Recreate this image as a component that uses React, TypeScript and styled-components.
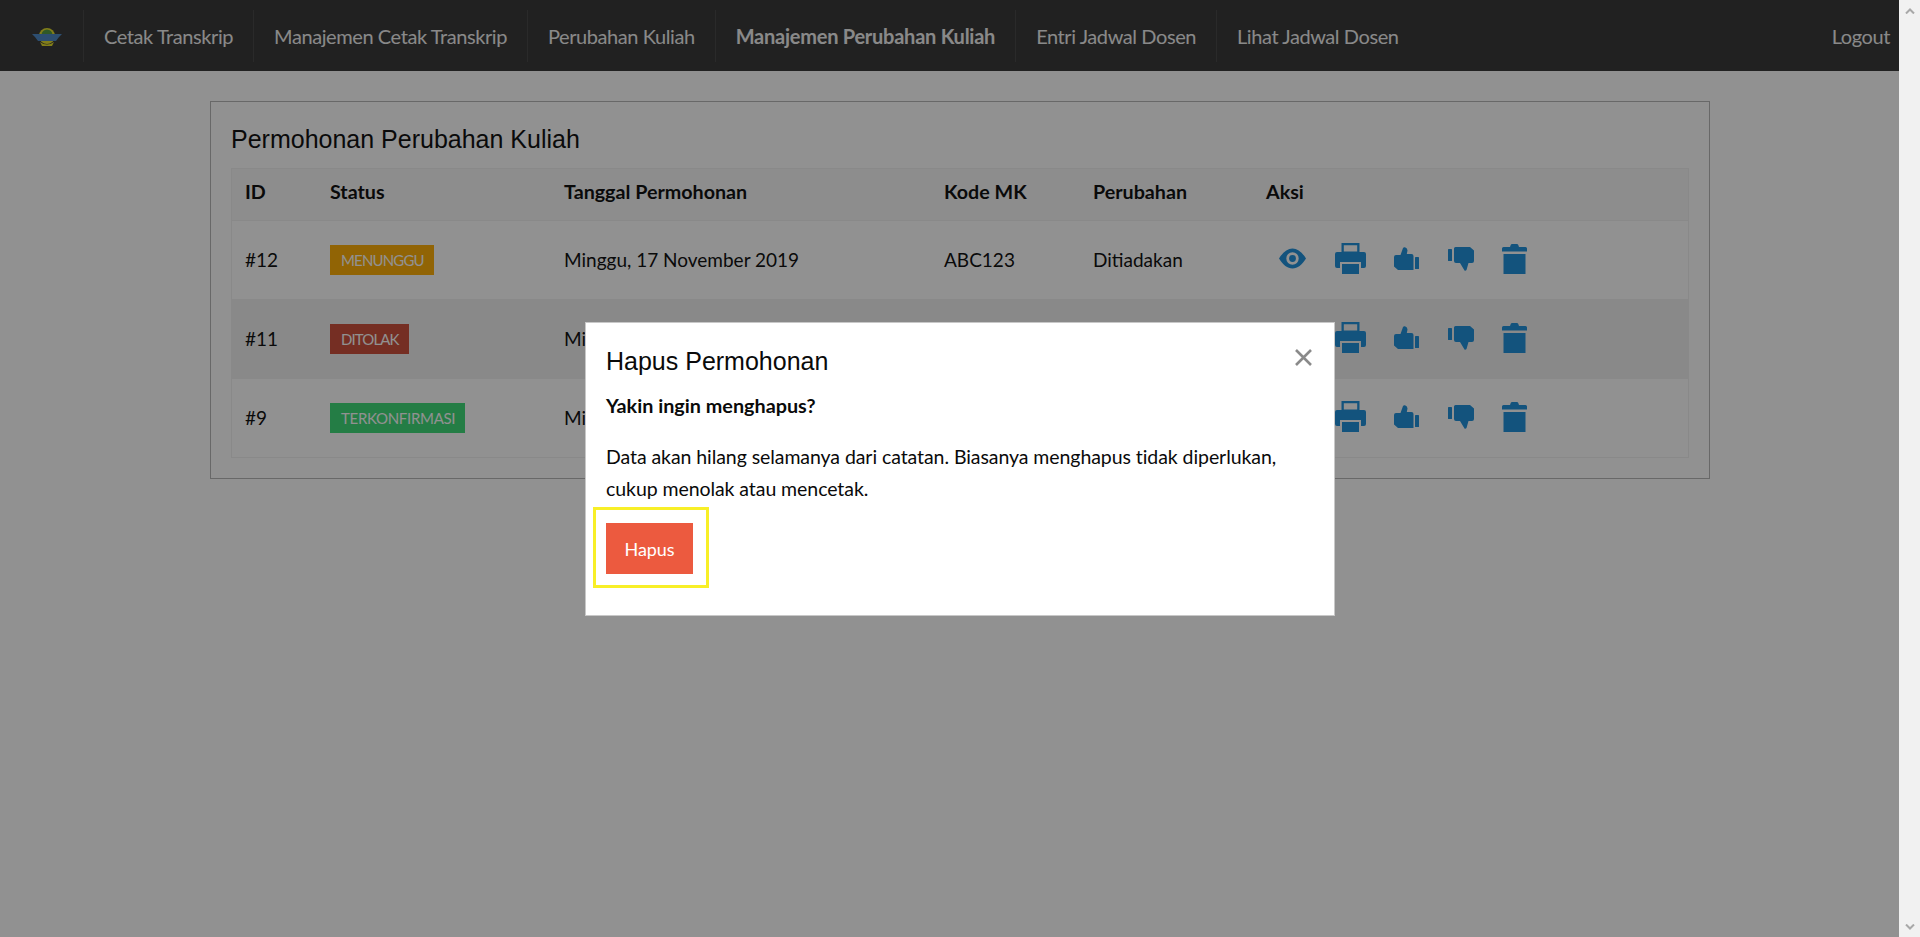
import React from "react";
import styled, { createGlobalStyle } from "styled-components";

const Global = createGlobalStyle`
  html, body { margin: 0; padding: 0; background: #fff; }
  body { font-family: Lato, "Open Sans", sans-serif; color: #0a0a0a; height: 937px; overflow: hidden; }
  * { box-sizing: border-box; }
`;

const Page = styled.div`
  width: 1920px;
  height: 937px;
  background: #fff;
`;

const Header = styled.header`
  height: 71px;
  background: #333;
  display: flex;
  align-items: center;
  padding: 0 30px 0 0;
`;

const LogoSlot = styled.div`
  width: 83px;
  display: flex;
  justify-content: center;
  padding-left: 11px;
  padding-top: 4px;
`;

const NavItem = styled.a<{ $active?: boolean }>`
  height: 52px;
  display: flex;
  align-items: center;
  padding: 0 20px;
  border-left: 1px solid #444;
  color: #f0f0f0;
  font-size: 20px;
  letter-spacing: ${(p) => (p.$active ? "-0.25px" : "-0.42px")};
  font-weight: ${(p) => (p.$active ? 700 : 400)};
  white-space: nowrap;
`;

const LogoutLink = styled.a`
  margin-left: auto;
  color: #f0f0f0;
  font-size: 20px;
  letter-spacing: -0.4px;
`;

const Panel = styled.section`
  width: 1500px;
  height: 378px;
  margin: 30px auto 0;
  border: 1px solid #b5b5b5;
  padding: 20px;
`;

const Title = styled.h2`
  margin: 0;
  height: 46px;
  font-family: "Liberation Sans", Arial, sans-serif;
  font-weight: 400;
  font-size: 25px;
  line-height: 34px;
  color: #0a0a0a;
`;

const Table = styled.div`
  border: 1px solid #f1f1f1;
`;

const Row = styled.div<{ $striped?: boolean }>`
  display: grid;
  grid-template-columns: 85px 234px 380px 149px 173px 1fr;
  align-items: center;
  height: 79px;
  background: ${(p) => (p.$striped ? "#f1f1f1" : "#fff")};
  border-bottom: 1px solid #f1f1f1;
  font-size: 19px;
  &:last-child { height: 78px; border-bottom: 0; }
`;

const HeadRow = styled(Row)`
  height: 52px;
  background: #f8f8f8;
  font-size: 19.7px;
  font-weight: 700;
  padding-bottom: 4px;
`;

const Cell = styled.div`
  padding: 0 0 2px 13px;
  white-space: nowrap;
`;

const BadgeCell = styled(Cell)`
  padding-bottom: 0;
`;

const tones = {
  warning: { bg: "#ffae00", spacing: "-0.85px" },
  alert: { bg: "#cc4b37", spacing: "-0.9px" },
  success: { bg: "#3adb76", spacing: "-0.3px" },
};

const Badge = styled.span<{ $tone: keyof typeof tones }>`
  display: inline-flex;
  align-items: center;
  height: 30px;
  padding: 0 10px 0 11px;
  background: ${(p) => tones[p.$tone].bg};
  color: #fff;
  font-size: 15px;
  letter-spacing: ${(p) => tones[p.$tone].spacing};
  vertical-align: middle;
`;

const Actions = styled.div`
  display: flex;
  align-items: center;
  gap: 28.5px;
  padding: 0 0 3px 26px;
`;

const Icon = styled.svg`
  display: block;
  fill: #1b8fdb;
`;

const Overlay = styled.div`
  position: fixed;
  inset: 0;
  background: rgba(10, 10, 10, 0.45);
  z-index: 10;
`;

const Modal = styled.div`
  position: absolute;
  left: 585px;
  top: 322px;
  width: 750px;
  height: 294px;
  background: #fff;
  border: 1px solid #c8c8c8;
  padding: 20px;
`;

const ModalTitle = styled.h3`
  margin: 2px 0 0;
  font-family: "Liberation Sans", Arial, sans-serif;
  font-weight: 400;
  font-size: 25px;
  line-height: 33px;
  color: #0a0a0a;
`;

const Close = styled.svg`
  position: absolute;
  right: 22px;
  top: 26px;
  stroke: #8a8a8a;
  stroke-width: 2.6;
  fill: none;
`;

const Lead = styled.p`
  margin: 11px 0 0;
  font-weight: 700;
  font-size: 19.8px;
  line-height: 32px;
`;

const Body = styled.p`
  margin: 20px 0 0;
  font-size: 19.5px;
  line-height: 32px;
  letter-spacing: -0.07px;
`;

const ButtonWrap = styled.div`
  position: relative;
  margin-top: 18px;
  width: 87px;
`;

const DangerButton = styled.button`
  display: block;
  width: 87px;
  height: 51px;
  border: 0;
  padding: 0;
  background: #ec5a3f;
  color: #fff;
  font-family: inherit;
  font-size: 18px;
  letter-spacing: -0.1px;
`;

const Highlight = styled.span`
  position: absolute;
  left: -13px;
  top: -16px;
  width: 116px;
  height: 81px;
  border: 3px solid #f8ef27;
  pointer-events: none;
`;

const ScrollRail = styled.div`
  position: fixed;
  top: 0;
  right: 0;
  bottom: 0;
  width: 21px;
  background: #f1f1f1;
  z-index: 20;
  display: flex;
  flex-direction: column;
  justify-content: space-between;
  align-items: center;
  padding: 8px 0 7px;
`;

const Chevron = styled.svg`
  display: block;
  stroke: #a8a8a8;
  stroke-width: 2;
  fill: none;
`;

const Eye = () => (
  <Icon width="27" height="21" viewBox="0 0 27 21">
    <path
      fillRule="evenodd"
      d="M0 10.5C4 4 8.5.5 13.5.5S23 4 27 10.5C23 17 18.5 20.5 13.5 20.5S4 17 0 10.5ZM13.5 4.3a6.2 6.2 0 1 0 0 12.4a6.2 6.2 0 1 0 0-12.4Z"
    />
    <circle cx="13.5" cy="10.5" r="3.4" />
  </Icon>
);

const Printer = () => (
  <Icon width="31" height="31" viewBox="0 0 31 31">
    <path fillRule="evenodd" d="M6.5 0H24.5V10H6.5ZM8.8 2.2V8.5H22.2V2.2Z" />
    <path d="M2 9H29Q31 9 31 11V23Q31 25 29 25H26V19H5V25H2Q0 25 0 23V11Q0 9 2 9Z" />
    <rect x="7" y="21" width="17" height="10" />
  </Icon>
);

const ThumbUp = () => (
  <Icon width="25" height="23" viewBox="0 0 25 23">
    <path d="M6.5 8L9 1Q9.8 0 11 .3Q13.5 1 13.5 3.5L12.8 7H17.5Q19.5 7 19.5 9V23H4L0 19.5V10Q0 8 2 8Z" />
    <rect x="21" y="10" width="4" height="12" rx=".6" />
  </Icon>
);

const ThumbDown = () => (
  <Icon width="26" height="24" viewBox="0 0 26 24">
    <rect x="0" y="2" width="4" height="12" rx=".6" />
    <path d="M6 1.5Q6 0 7.5 0H22L26 3.5V14Q26 16 24 16H20.5L18.5 23Q17.5 24.3 16.5 23.5L12 16H8Q6 16 6 14Z" />
  </Icon>
);

const Trash = () => (
  <Icon width="25" height="30" viewBox="0 0 25 30">
    <path d="M8 3L8.8 .8Q9.2 0 10 0H15Q15.8 0 16.2 .8L17 3H23.5Q25 3 25 4.5V7.5H0V4.5Q0 3 1.5 3Z" />
    <rect x="1.5" y="10" width="22" height="20" />
  </Icon>
);

const Logo = () => (
  <svg width="30" height="19" viewBox="0 0 30 19">
    <circle cx="15" cy="8" r="8" fill="#e4dc26" />
    <circle cx="15" cy="7" r="5.5" fill="#4f9a3e" />
    <path d="M0 6H30L27 9L24 13H6L3 9Z" fill="#4a86c4" />
    <path d="M8 14Q15 19 22 14L20 18H10Z" fill="#e4dc26" />
  </svg>
);

const rows = [
  { id: "#12", tone: "warning" as const, status: "MENUNGGU", striped: false },
  { id: "#11", tone: "alert" as const, status: "DITOLAK", striped: true },
  { id: "#9", tone: "success" as const, status: "TERKONFIRMASI", striped: false },
];

const navItems = [
  "Cetak Transkrip",
  "Manajemen Cetak Transkrip",
  "Perubahan Kuliah",
  "Manajemen Perubahan Kuliah",
  "Entri Jadwal Dosen",
  "Lihat Jadwal Dosen",
];

export default function App() {
  return (
    <Page>
      <Global />
      <Header>
        <LogoSlot>
          <Logo />
        </LogoSlot>
        {navItems.map((n) => (
          <NavItem key={n} $active={n === "Manajemen Perubahan Kuliah"}>
            {n}
          </NavItem>
        ))}
        <LogoutLink>Logout</LogoutLink>
      </Header>
      <Panel>
        <Title>Permohonan Perubahan Kuliah</Title>
        <Table>
          <HeadRow>
            <Cell>ID</Cell>
            <Cell>Status</Cell>
            <Cell>Tanggal Permohonan</Cell>
            <Cell>Kode MK</Cell>
            <Cell>Perubahan</Cell>
            <Cell>Aksi</Cell>
          </HeadRow>
          {rows.map((r) => (
            <Row key={r.id} $striped={r.striped}>
              <Cell>{r.id}</Cell>
              <BadgeCell>
                <Badge $tone={r.tone}>{r.status}</Badge>
              </BadgeCell>
              <Cell>Minggu, 17 November 2019</Cell>
              <Cell>ABC123</Cell>
              <Cell>Ditiadakan</Cell>
              <Actions>
                <Eye />
                <Printer />
                <ThumbUp />
                <ThumbDown />
                <Trash />
              </Actions>
            </Row>
          ))}
        </Table>
      </Panel>
      <Overlay>
        <Modal>
          <ModalTitle>Hapus Permohonan</ModalTitle>
          <Close width="17" height="17" viewBox="0 0 17 17">
            <path d="M1 1L16 16M16 1L1 16" />
          </Close>
          <Lead>Yakin ingin menghapus?</Lead>
          <Body>
            Data akan hilang selamanya dari catatan. Biasanya menghapus tidak diperlukan,
            <br />
            cukup menolak atau mencetak.
          </Body>
          <ButtonWrap>
            <DangerButton>Hapus</DangerButton>
            <Highlight />
          </ButtonWrap>
        </Modal>
      </Overlay>
      <ScrollRail>
        <Chevron width="10" height="6" viewBox="0 0 10 6">
          <path d="M1 5.5L5 1.5L9 5.5" />
        </Chevron>
        <Chevron width="10" height="6" viewBox="0 0 10 6">
          <path d="M1 .5L5 4.5L9 .5" />
        </Chevron>
      </ScrollRail>
    </Page>
  );
}
